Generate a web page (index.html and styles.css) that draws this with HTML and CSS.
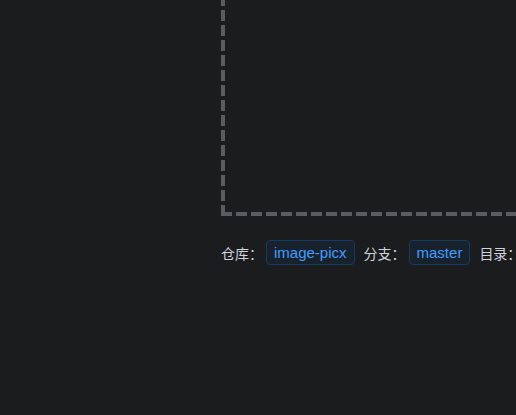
FILE: index.html
```html
<!DOCTYPE html>
<html lang="zh">
<head>
<meta charset="utf-8">
<link rel="stylesheet" href="styles.css">
</head>
<body>
<div class="page">
  <div class="dragger"></div>
  <div class="info">
    <span class="label">仓库：</span>
    <span class="tag">image-picx</span>
    <span class="label">分支：</span>
    <span class="tag">master</span>
    <span class="label">目录：</span>
  </div>
</div>
</body>
</html>
```
FILE: styles.css
```css
html, body {
  margin: 0;
  padding: 0;
  background: #1b1c1e;
}
.page {
  width: 516px;
  height: 415px;
  overflow: hidden;
  box-sizing: border-box;
  padding-left: 221px;
  font-family: "Liberation Sans", "Noto Sans CJK SC", sans-serif;
  font-size: 14px;
  color: #cfd3dc;
}
.dragger {
  width: 420px;
  height: 300px;
  margin-top: -84px;
  background-image:
    linear-gradient(to bottom, transparent 4px, #5a5c5f 4px),
    linear-gradient(to right, #5a5c5f 11px, transparent 11px);
  background-size: 4px 15px, 15px 4px;
  background-position: left bottom, left bottom;
  background-repeat: repeat-y, repeat-x;
}
.info {
  display: flex;
  align-items: center;
  white-space: nowrap;
  margin-top: 24px;
  height: 25px;
}
.label {
  font-family: "Noto Sans CJK SC", sans-serif;
  margin-right: 3px;
}
.tag {
  box-sizing: border-box;
  height: 25px;
  display: inline-flex;
  align-items: center;
  padding: 0 7px;
  border: 1px solid #153b63;
  border-radius: 4px;
  background: #18222c;
  color: #409eff;
  font-size: 15px;
  margin-right: 9px;
}
```
